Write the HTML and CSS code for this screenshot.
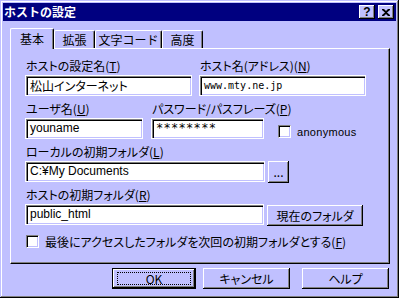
FILE: index.html
```html
<!DOCTYPE html>
<html lang="ja">
<head>
<meta charset="utf-8">
<link rel="stylesheet" href="styles.css">
</head>
<body>
<div class="window">
  <div class="titlebar">
    <span class="title">ホストの設定</span>
    <div class="tbtns">
      <span class="tbtn q">?</span>
      <span class="tbtn x">
        <svg width="8" height="7" viewBox="0 0 8 7"><path d="M0 0h2l2 2 2-2h2v1L5 3.5 8 6v1H6L4 5 2 7H0V6l3-2.5L0 1z" fill="#000"/></svg>
      </span>
    </div>
  </div>
  <div class="content">
    <div class="tabs">
      <div class="tab active w1">基本</div>
      <div class="tab w2">拡張</div>
      <div class="tab w3">文字コード</div>
      <div class="tab w4">高度</div>
    </div>
    <div class="panel">
      <div class="row">
        <div class="field f1">
          <label>ホストの設定名(<u>T</u>)</label>
          <div class="input">松山インターネット</div>
        </div>
        <div class="field f2">
          <label>ホスト名(アドレス)(<u>N</u>)</label>
          <div class="input mono">www.mty.ne.jp</div>
        </div>
      </div>
      <div class="row">
        <div class="field f3">
          <label>ユーザ名(<u>U</u>)</label>
          <div class="input latin">youname</div>
        </div>
        <div class="field f4">
          <label>パスワード/パスフレーズ(<u>P</u>)</label>
          <div class="input pw">********</div>
        </div>
        <div class="check anon">
          <span class="box"></span>
          <span class="anontext">anonymous</span>
        </div>
      </div>
      <div class="row">
        <div class="field f5">
          <label>ローカルの初期フォルダ(<u>L</u>)</label>
          <div class="inline">
            <div class="input latin wide">C:¥My Documents</div>
            <button class="btn dots">...</button>
          </div>
        </div>
      </div>
      <div class="row">
        <div class="field f5">
          <label>ホストの初期フォルダ(<u>R</u>)</label>
          <div class="inline">
            <div class="input latin wide">public_html</div>
            <button class="btn cur">現在のフォルダ</button>
          </div>
        </div>
      </div>
      <div class="check last">
        <span class="box"></span>
        <span>最後にアクセスしたフォルダを次回の初期フォルダとする(<u>F</u>)</span>
      </div>
    </div>
    <div class="buttons">
      <button class="btn big default"><span class="focus">OK</span></button>
      <button class="btn big cancel">キャンセル</button>
      <button class="btn big help">ヘルプ</button>
    </div>
  </div>
</div>
</body>
</html>
```

FILE: styles.css
```css
* { box-sizing: border-box; }
html, body { margin: 0; padding: 0; background: #c0c0ff; }
body {
  font-family: "Noto Sans CJK JP", "Noto Sans", sans-serif;
  font-size: 12px;
  color: #000;
  font-feature-settings: "palt";
}
.window {
  width: 399px;
  height: 298px;
  background: #c0c0ff;
  padding: 3px;
  box-shadow: inset -1px -1px #000, inset 1px 1px #c0c0ff, inset -2px -2px #808080, inset 2px 2px #fff;
}
.titlebar {
  height: 18px;
  background: #000080;
  color: #fff;
  display: flex;
  align-items: center;
  justify-content: space-between;
  padding: 0 2px 0 1px;
}
.title {
  font-weight: bold;
  font-size: 12px;
  line-height: 18px;
  font-feature-settings: normal;
}
.tbtns { display: flex; gap: 2px; }
.tbtn {
  width: 16px;
  height: 14px;
  background: #c0c0ff;
  color: #000;
  display: flex;
  align-items: center;
  justify-content: center;
  font-family: "Liberation Sans", sans-serif;
  font-weight: bold;
  font-size: 12px;
  box-shadow: inset -1px -1px #000, inset 1px 1px #fff, inset -2px -2px #808080;
}
.tbtn.x { margin-left: 1px; }
.content { padding: 0 6px 0 7px; }
.tabs {
  display: flex;
  align-items: flex-end;
  height: 27px;
  position: relative;
  z-index: 1;
}
.tab {
  height: 18px;
  border-top: 1px solid #fff;
  border-left: 1px solid #fff;
  border-right: 1px solid #000;
  box-shadow: inset -1px 0 #808080;
  border-radius: 2px 2px 0 0;
  display: flex;
  align-items: center;
  justify-content: center;
  line-height: 16px;
  padding-top: 1px;
  font-feature-settings: normal;
}
.tab.active {
  height: 21px;
  background: #c0c0ff;
  margin-bottom: -1px;
  padding-top: 0;
}
.w1 { width: 44px; }
.w2 { width: 41px; }
.w3 { width: 67px; }
.w4 { width: 41px; }
.panel {
  height: 216px;
  border-top: 1px solid #fff;
  border-left: 1px solid #fff;
  border-right: 1px solid #000;
  border-bottom: 1px solid #000;
  box-shadow: inset -1px -1px #808080;
  padding: 9px 15px 0 15px;
  display: flex;
  flex-direction: column;
  gap: 6px;
}
.row { display: flex; align-items: flex-start; height: 37px; }
.field { display: flex; flex-direction: column; gap: 3px; }
label { height: 15px; line-height: 15px; white-space: nowrap; }
u { text-decoration: underline; text-underline-offset: 1px; }
.input {
  height: 19px;
  background: #fff;
  box-shadow: inset 1px 1px #000, inset -1px -1px #c0c0ff, 0 0 0 1px #fff;
  border-top: 1px solid #808080;
  border-left: 1px solid #808080;
  padding: 0 3px;
  line-height: 17px;
  white-space: nowrap;
  overflow: hidden;
}
.latin { font-family: "Liberation Sans", sans-serif; font-size: 12px; }
.mono { font-family: "DejaVu Sans Mono", monospace; font-size: 10px; }
.pw { font-family: "DejaVu Sans Mono", monospace; font-size: 12px; letter-spacing: 0.3px; }
.f1 { width: 165px; }
.f2 { width: 165px; margin-left: 9px; }
.f3 { width: 116px; }
.f4 { width: 111px; margin-left: 10px; }
.f5 { width: 337px; }
.inline { display: flex; gap: 4px; align-items: flex-start; }
.wide { width: 238px; }
.check { display: flex; align-items: center; gap: 6px; white-space: nowrap; }
.box {
  width: 13px;
  height: 13px;
  background: #fff;
  border-top: 1px solid #808080;
  border-left: 1px solid #808080;
  border-right: 1px solid #fff;
  border-bottom: 1px solid #fff;
  box-shadow: inset 1px 1px #000, inset -1px -1px #c0c0ff;
  flex: none;
}
.anon { margin-left: 15px; margin-top: 24px; }
.anontext { font-family: "Liberation Sans", sans-serif; font-size: 11px; letter-spacing: 0.3px; }
.last { margin-top: 4px; height: 14px; }
.btn {
  font-family: "Noto Sans CJK JP", sans-serif;
  font-size: 12px;
  color: #000;
  background: #c0c0ff;
  border: none;
  padding: 0;
  margin: 0;
  box-shadow: inset -1px -1px #000, inset 1px 1px #fff, inset -2px -2px #808080;
  display: flex;
  align-items: center;
  justify-content: center;
  font-feature-settings: "palt";
}
.dots { width: 21px; height: 22px; margin-top: -1px; line-height: 1; }
.cur { width: 96px; height: 21px; }
.buttons {
  display: flex;
  padding-top: 4px;
  padding-left: 102px;
}
.big { width: 87px; height: 21px; }
.default {
  width: 84px;
  box-shadow: inset 0 0 0 1px #000, inset -2px -2px #000, inset 2px 2px #fff, inset -3px -3px #808080;
}
.cancel { margin-left: 7px; }
.help { margin-left: 12px; }
.focus {
  display: flex;
  align-items: center;
  justify-content: center;
  width: 74px;
  height: 13px;
  border: 1px dotted #000;
}
```
